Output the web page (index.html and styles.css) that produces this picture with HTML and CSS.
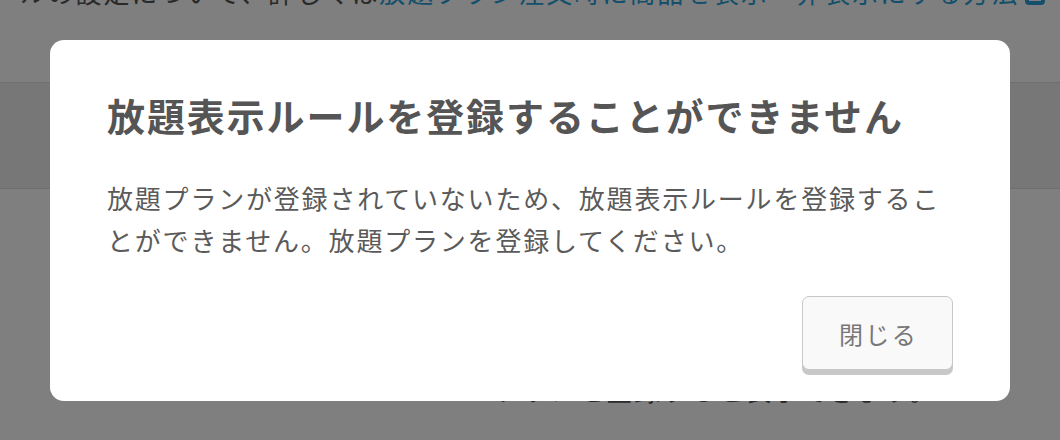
FILE: index.html
```html
<!DOCTYPE html>
<html lang="ja">
<head>
<meta charset="utf-8">
<title>放題表示ルール</title>
<link rel="stylesheet" href="styles.css">
</head>
<body>
<div class="page">
  <p class="intro">ルの設定について、詳しくは<a class="link" href="#">放題プラン注文時に商品を表示・非表示にする方法<svg class="ext" viewBox="0 0 20 20" width="20" height="20"><rect x="2" y="2" width="16" height="16" rx="2" fill="none" stroke="currentColor" stroke-width="4"/></svg></a></p>
  <div class="table-head"></div>
  <p class="notice">プランを登録すると表示できます。</p>
</div>

<div class="overlay">
  <div class="modal" role="dialog">
    <h2 class="modal-title">放題表示ルールを登録することができません</h2>
    <p class="modal-body">放題プランが登録されていないため、放題表示ルールを登録することができません。放題プランを登録してください。</p>
    <div class="modal-footer">
      <button class="btn-close" type="button">閉じる</button>
    </div>
  </div>
</div>
</body>
</html>
```

FILE: styles.css
```css
html, body {
  margin: 0;
  padding: 0;
  background: #ffffff;
  overflow: hidden;
}

body {
  font-family: "Noto Sans CJK JP", "Noto Sans", sans-serif;
  color: #555555;
  width: 1060px;
  height: 440px;
}

.page {
  display: flex;
  flex-direction: column;
}

.intro {
  margin: -28px 0 0 0;
  padding-left: 20px;
  font-size: 26px;
  letter-spacing: 1.8px;
  line-height: 40px;
  white-space: nowrap;
  color: #555555;
}

.link {
  color: #2a9fd6;
  text-decoration: none;
}

.ext {
  vertical-align: -2px;
  margin-left: 6px;
}

.table-head {
  margin-top: 70px;
  height: 105px;
  background: #eeeeee;
  border-top: 1px solid #dddddd;
  border-bottom: 1px solid #dddddd;
}

.notice {
  margin: 181px 0 0 0;
  padding-left: 495px;
  font-size: 26px;
  letter-spacing: 1.8px;
  line-height: 40px;
  white-space: nowrap;
  color: #555555;
}

.overlay {
  position: fixed;
  inset: 0;
  background: rgba(0, 0, 0, 0.5);
  display: flex;
  align-items: flex-start;
  padding: 40px 0 0 50px;
}

.modal {
  width: 960px;
  box-sizing: border-box;
  background: #ffffff;
  border-radius: 14px;
  padding: 50px 57px 31px 57px;
}

.modal-title {
  margin: 0;
  font-size: 38px;
  font-weight: 700;
  letter-spacing: 1.9px;
  line-height: 50px;
  color: #555555;
}

.modal-body {
  margin: 37px 0 0 0;
  font-size: 26px;
  letter-spacing: 1.8px;
  line-height: 42px;
  color: #5a5a5a;
}

.modal-footer {
  display: flex;
  justify-content: flex-end;
  margin-top: 35px;
}

.btn-close {
  width: 151px;
  height: 74px;
  box-sizing: border-box;
  border: 1.5px solid #c8c8c8;
  border-radius: 7px;
  background: #f9f9f9;
  box-shadow: 0 5px 0 #c8c8c8;
  font-family: "Noto Sans CJK JP", "Noto Sans", sans-serif;
  font-size: 24px;
  letter-spacing: 2.4px;
  color: #777777;
  padding: 0 0 0 2px;
  cursor: pointer;
}
```
